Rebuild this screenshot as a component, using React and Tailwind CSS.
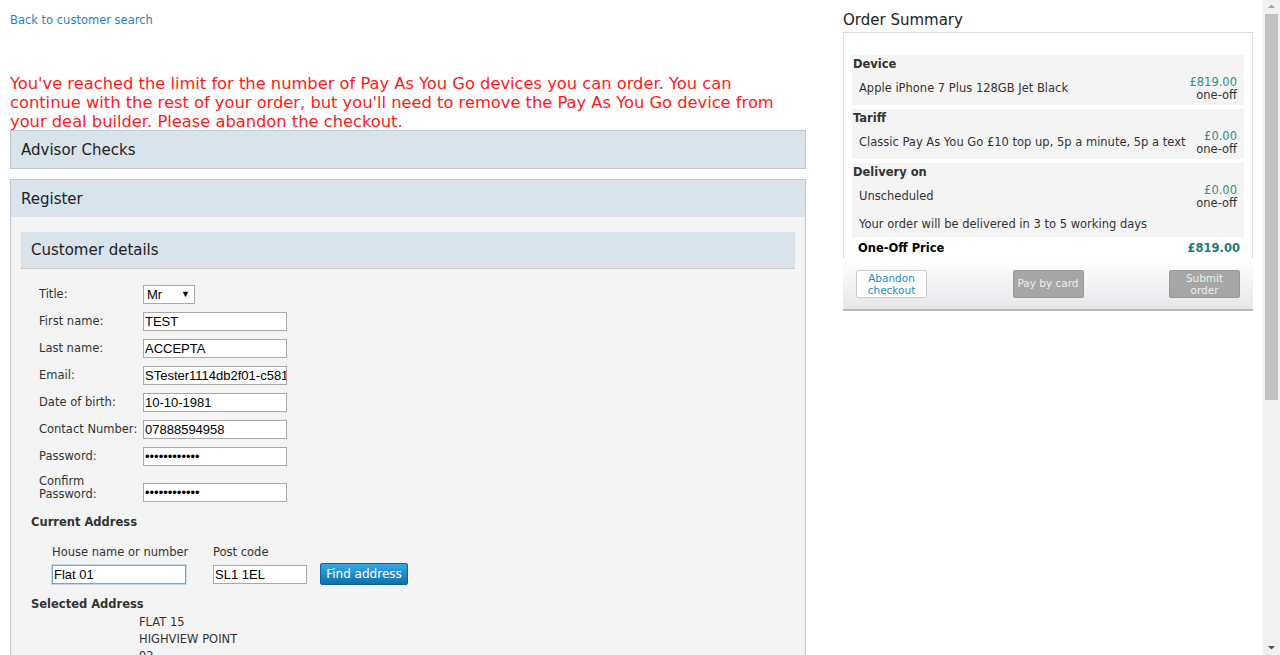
const font = { fontFamily: '"DejaVu Sans", Verdana, sans-serif' };

const fields = [
  { label: "First name:", value: "TEST" },
  { label: "Last name:", value: "ACCEPTA" },
  { label: "Email:", value: "STester1114db2f01-c581" },
  { label: "Date of birth:", value: "10-10-1981" },
  { label: "Contact Number:", value: "07888594958" },
  { label: "Password:", value: "••••••••••••" },
];

const Input = ({ value, w = "w-[144px]", focus }) => (
  <div
    className={`${w} h-[19px] shrink-0 bg-white border ${
      focus ? "border-[#7da2ce] shadow-[0_0_0_1px_#c4d8f0]" : "border-[#a9a9a9]"
    } px-[1px] flex items-center overflow-hidden whitespace-nowrap text-[13px] text-black leading-none`}
    style={{ fontFamily: '"Liberation Sans", Arial, sans-serif' }}
  >
    {value}
  </div>
);

const SummarySection = ({ title, children }) => (
  <div className="bg-[#f4f4f4] px-[1px] pt-[3px] pb-[3px] mb-[4px]">
    <div className="font-bold text-[11.5px] text-[#333] h-[13px] leading-[13px]">{title}</div>
    {children}
  </div>
);

const Item = ({ name, price }) => (
  <div className="flex items-center justify-between pl-[6px] pr-[6px] pt-[5px] text-[11.5px] text-[#333]">
    <span>{name}</span>
    <div className="text-right leading-[13px]">
      <div className="text-[#3a8a8a]">{price}</div>
      <div>one-off</div>
    </div>
  </div>
);

export default function App() {
  return (
    <div className="h-[655px] w-[1280px] overflow-hidden bg-white flex" style={font}>
      <div className="w-[806px] pl-[10px] shrink-0">
        <div className="pt-[7px] h-[74px]">
          <a className="text-[11.5px] text-[#2a7fbf]">Back to customer search</a>
        </div>
        <p className="text-[16.3px] leading-[19px] text-[#ff1a1a] pr-[10px]">
          You've reached the limit for the number of Pay As You Go devices you can order. You can
          continue with the rest of your order, but you'll need to remove the Pay As You Go device from
          your deal builder. Please abandon the checkout.
        </p>
        <div className="mt-[-1px] h-[39px] bg-[#d9e3ec] border border-[#bcc6cf] flex items-center pl-[10px] pt-[1px] text-[15px] text-[#222]">
          Advisor Checks
        </div>
        <div className="mt-[10px] border border-[#bcc6cf] bg-[#f4f4f4] h-[600px]">
          <div className="h-[37px] bg-[#d9e3ec] flex items-center pl-[10px] pt-[1px] text-[15px] text-[#222]">
            Register
          </div>
          <div className="px-[10px] pt-[15px]">
            <div className="h-[37px] bg-[#d9e3ec] border-b border-dotted border-[#b5b5b5] flex items-center pl-[10px] pt-[1px] text-[15px] text-[#222]">
              Customer details
            </div>
            <div className="pl-[18px] pt-[16px] text-[11.5px] text-[#333]">
              <div className="flex items-center h-[19px]">
                <span className="w-[104px]">Title:</span>
                <div
                  className="w-[52px] h-[19px] bg-white border border-[#a9a9a9] flex items-center justify-between px-[3px] text-[13px] text-black"
                  style={{ fontFamily: '"Liberation Sans", Arial, sans-serif' }}
                >
                  <span>Mr</span>
                  <span className="text-[9px] pr-[1px]">▼</span>
                </div>
              </div>
              {fields.map((f) => (
                <div key={f.label} className="flex items-center h-[19px] mt-[8px]">
                  <span className="w-[104px] shrink-0">{f.label}</span>
                  <Input value={f.value} />
                </div>
              ))}
              <div className="flex items-start mt-[9px]">
                <span className="w-[104px] shrink-0 leading-[13px]">
                  Confirm
                  <br />
                  Password:
                </span>
                <div className="mt-[8px]">
                  <Input value="••••••••••••" />
                </div>
              </div>
            </div>
            <div className="pl-[10px] mt-[12px] font-bold text-[11.5px] text-[#333]">Current Address</div>
            <div className="pl-[31px] mt-[13px] flex items-end text-[11.5px] text-[#333]">
              <div className="w-[161px] shrink-0">
                <div className="mb-[3px] whitespace-nowrap">House name or number</div>
                <Input value="Flat 01" w="w-[134px]" focus />
              </div>
              <div className="w-[107px] shrink-0">
                <div className="mb-[3px]">Post code</div>
                <Input value="SL1 1EL" w="w-[94px]" />
              </div>
              <button className="mb-[-1px] w-[88px] h-[22px] rounded-[2px] border border-[#0e6497] bg-gradient-to-b from-[#35aae6] to-[#0e70aa] text-white text-[12px]">
                Find address
              </button>
            </div>
            <div className="pl-[10px] mt-[12px] font-bold text-[11.5px] text-[#333]">Selected Address</div>
            <div className="pl-[118px] mt-[1px] text-[11.5px] text-[#333] leading-[17px]">
              <div>FLAT 15</div>
              <div>HIGHVIEW POINT</div>
              <div>92</div>
            </div>
          </div>
        </div>
      </div>

      <div className="ml-[37px] w-[410px] shrink-0">
        <div className="pt-[9px] h-[32px] text-[15px] text-[#222]">Order Summary</div>
        <div className="border border-[#ddd] border-b-0 px-[8px] pt-[22px] pb-[0px]">
          <SummarySection title="Device">
            <Item name="Apple iPhone 7 Plus 128GB Jet Black" price="£819.00" />
          </SummarySection>
          <SummarySection title="Tariff">
            <Item name="Classic Pay As You Go £10 top up, 5p a minute, 5p a text" price="£0.00" />
          </SummarySection>
          <div className="bg-[#f4f4f4] px-[1px] pt-[3px] pb-[4px]">
            <div className="font-bold text-[11.5px] text-[#333] h-[13px] leading-[13px]">Delivery on</div>
            <Item name="Unscheduled" price="£0.00" />
            <div className="pl-[6px] mt-[6px] text-[11.5px] text-[#333]">
              Your order will be delivered in 3 to 5 working days
            </div>
          </div>
          <div className="flex justify-between items-center h-[22px] pl-[6px] pr-[4px] text-[11.5px] font-bold">
            <span className="text-black">One-Off Price</span>
            <span className="text-[#1e7a72]">£819.00</span>
          </div>
        </div>
        <div className="h-[52px] bg-gradient-to-b from-white to-[#e6e6ea] border-b-2 border-[#b8b8b8] flex items-center justify-between pl-[13px] pr-[13px]">
          <button className="w-[71px] h-[28px] bg-white border border-[#ccc] rounded-[2px] text-[10.5px] leading-[12px] text-[#1b8ad0]">
            Abandon
            <br />
            checkout
          </button>
          <button className="w-[71px] h-[28px] bg-[#a6a6a6] border border-[#999] rounded-[2px] text-[10.5px] text-[#eee]">
            Pay by card
          </button>
          <button className="w-[71px] h-[28px] bg-[#a6a6a6] border border-[#999] rounded-[2px] text-[10.5px] leading-[12px] text-[#eee]">
            Submit
            <br />
            order
          </button>
        </div>
      </div>

      <div className="ml-[10px] w-[17px] shrink-0 bg-[#f0f0f0] flex flex-col items-center">
        <svg width="17" height="14" viewBox="0 0 17 14">
          <path d="M5 8 L8.5 4.5 L12 8 Z" fill="#a3a3a3" />
        </svg>
        <div className="w-[13px] h-[386px] bg-[#c1c1c1]" />
        <div className="flex-1" />
        <svg width="17" height="14" viewBox="0 0 17 14">
          <path d="M5 5 L8.5 8.5 L12 5 Z" fill="#505050" />
        </svg>
      </div>
    </div>
  );
}
